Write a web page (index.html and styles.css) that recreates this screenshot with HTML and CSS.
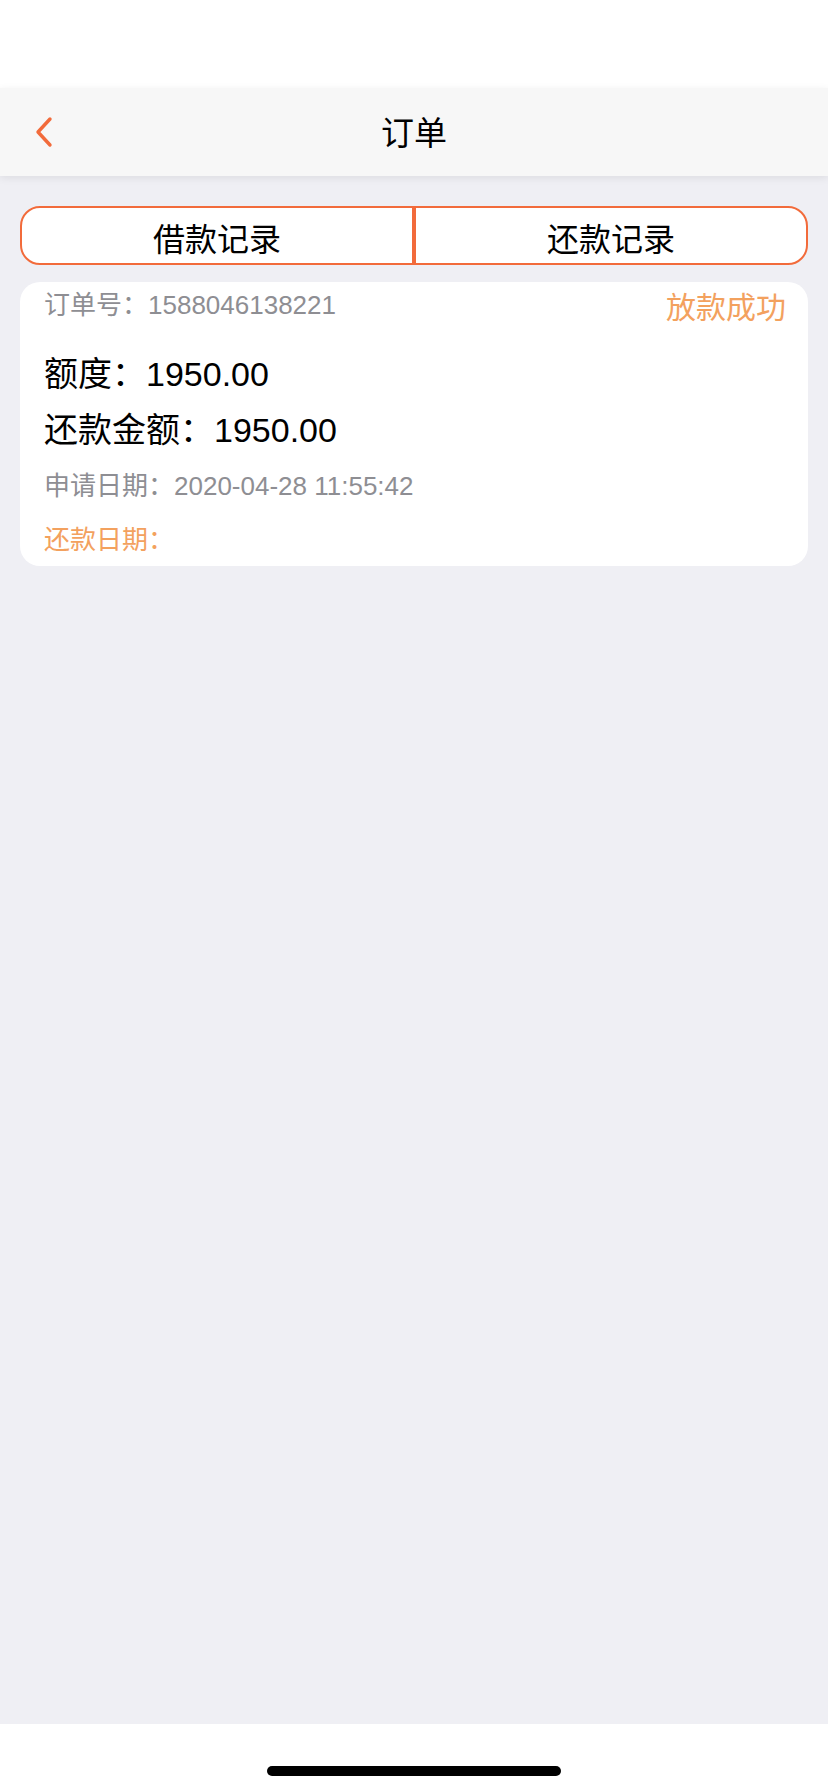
FILE: index.html
```html
<!DOCTYPE html>
<html>
<head>
    <title>订单</title>
    <meta name="viewport" content="initial-scale=1,maximum-scale=1,user-scalable=no">
    <link rel="stylesheet" href="styles.css">
</head>
<body>
    <div class="statusbar"></div>
    <div class="navbar">
        <svg class="back" width="24" height="32" viewBox="0 0 24 32">
            <polyline points="18,3 6,16 18,29" fill="none" stroke="#f26b3b" stroke-width="3.4" stroke-linecap="round" stroke-linejoin="round"></polyline>
        </svg>
        <div class="title">订单</div>
    </div>
    <div class="container">
        <div class="tabs">
            <div class="tab tab-left">借款记录</div>
            <div class="tab tab-right">还款记录</div>
        </div>
        <div class="card">
            <div class="card-head">
                <span class="order-no">订单号：1588046138221</span>
                <span class="status">放款成功</span>
            </div>
            <div class="amount">额度：1950.00</div>
            <div class="amount">还款金额：1950.00</div>
            <div class="date">申请日期：2020-04-28 11:55:42</div>
            <div class="date repay">还款日期：</div>
        </div>
    </div>
    <div class="homebar">
        <div class="indicator"></div>
    </div>
</body>
</html>
```

FILE: styles.css
```css
*{
    box-sizing: border-box;
}
body{
    margin:0;
    height:1792px;
    background-color: #efeff4;
    display:flex;
    flex-direction: column;
    font-family: "Liberation Sans", "Noto Sans CJK SC", sans-serif;
    color:#000;
}
.statusbar{
    height:88px;
    background-color: #fff;
}
.navbar{
    height:88px;
    padding-top:4px;
    background-color: #f7f7f7;
    box-shadow: 0 2px 8px rgba(0,0,0,0.08);
    display:flex;
    align-items: center;
    justify-content: center;
    position: relative;
    z-index: 1;
}
.back{
    position: absolute;
    left:32px;
    top:28px;
}
.title{
    font-size: 33px;
    line-height: 40px;
}
.container{
    flex:1;
    padding:30px 20px 0;
}
.tabs{
    display:flex;
    height:59px;
}
.tab{
    flex:1;
    display:flex;
    align-items: center;
    justify-content: center;
    padding-top:2px;
    background-color: #fff;
    border:2px solid #f26b3b;
    font-size: 32px;
}
.tab-left{
    border-radius: 20px 0 0 20px;
}
.tab-right{
    border-radius: 0 20px 20px 0;
}
.card{
    margin-top:17px;
    background-color: #fff;
    border-radius: 20px;
    padding:8px 22px 0 24px;
}
.card-head{
    display:flex;
    justify-content: space-between;
    align-items: flex-start;
    height:36px;
    margin-bottom: 20px;
}
.order-no{
    font-size: 26px;
    line-height: 30px;
    color:#8e8e93;
}
.status{
    font-size: 30px;
    line-height: 36px;
    color:#f3a15e;
}
.amount{
    font-size: 34px;
    line-height: 56px;
}
.date{
    font-size: 26px;
    line-height: 56px;
    color:#8e8e93;
}
.date.repay{
    line-height: 52px;
    color:#f3a15e;
}
.homebar{
    height:68px;
    background-color: #fff;
    display:flex;
    justify-content: center;
    padding-top:42px;
}
.indicator{
    width:294px;
    height:10px;
    border-radius: 5px;
    background-color: #000;
}
```
